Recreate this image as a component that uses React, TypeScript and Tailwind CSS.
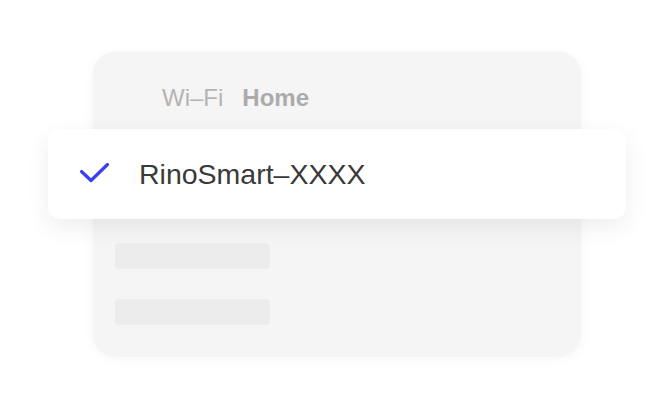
import React from "react"

const Check = () => (
  <svg width="32" height="24" viewBox="0 0 32 24" fill="none" className="shrink-0">
    <path d="M2.5 9.5 L12 18.5 L28.5 2.5" stroke="#3b3ff2" strokeWidth="3.2" strokeLinecap="round" strokeLinejoin="round" />
  </svg>
)

export default function App() {
  return (
    <div className="w-[670px] h-[410px] bg-white pt-[51px] pl-[92px]" style={{ fontFamily: "'Liberation Sans', Arial, sans-serif" }}>
      <div className="w-[490px] h-[307px] rounded-[24px] bg-[#f5f5f5] border border-[#fafafa] shadow-[0_2px_12px_rgba(0,0,0,0.03)] flex flex-col">
        <div className="pl-[69px] pt-[29px] h-[77px] flex items-start text-[24px] leading-[34px] text-[#b4b4b4]">
          <span>Wi–Fi</span>
          <span className="ml-[19px] font-bold text-[#ababab]">Home</span>
        </div>
        <div className="-mx-[45px] h-[90px] rounded-[12px] bg-white shadow-[0_8px_24px_rgba(0,0,0,0.07)] flex items-center pl-[31px]">
          <Check />
          <span className="ml-[28px] text-[28.5px] text-[#3a3a3a]">RinoSmart–XXXX</span>
        </div>
        <div className="pl-[22px] pt-[24px] flex flex-col gap-[30px]">
          <div className="w-[155px] h-[26px] rounded-[4px] bg-[#ececec]" />
          <div className="w-[155px] h-[26px] rounded-[4px] bg-[#ececec]" />
        </div>
      </div>
    </div>
  )
}
